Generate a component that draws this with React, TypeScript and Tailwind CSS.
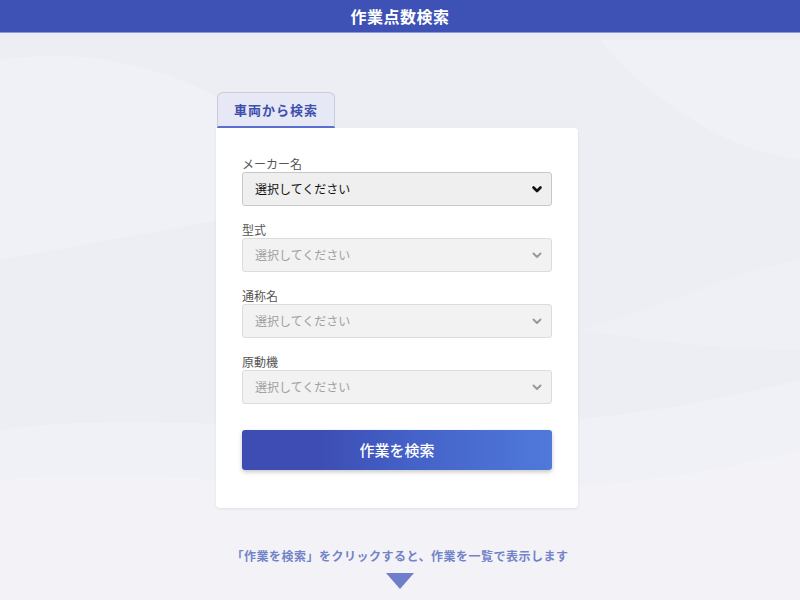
import React from "react";

const font = { fontFamily: '"Noto Sans CJK JP", "Noto Sans", sans-serif' };

const Chevron = ({ disabled }: { disabled?: boolean }) => (
    <svg
        className="pointer-events-none absolute right-[9px] top-1/2 -translate-y-1/2"
        width="12"
        height="12"
        viewBox="0 0 12 12"
    >
        <path
            d="M2.5 4.5 L6 8 L9.5 4.5"
            fill="none"
            stroke={disabled ? "#9a9a9a" : "#111"}
            strokeWidth={disabled ? 2 : 2.6}
            strokeLinecap="round"
            strokeLinejoin="round"
        />
    </svg>
);

const Field = ({ label, disabled }: { label: string; disabled?: boolean }) => (
    <div className="flex flex-col">
        <label className="text-xs leading-4 text-[#555]">{label}</label>
        <div className="relative">
            <select
                disabled={disabled}
                defaultValue=""
                style={font}
                className={
                    disabled
                        ? "h-[34px] w-full appearance-none rounded-[3px] border border-[#dcdcdc] bg-[#f2f2f2] pl-[12px] text-xs text-[#a0a0a0] outline-none"
                        : "h-[34px] w-full appearance-none rounded-[3px] border border-[#c8c8c8] bg-[#efefef] pl-[12px] text-xs text-[#111] outline-none"
                }
            >
                <option value="">選択してください</option>
            </select>
            <Chevron disabled={disabled} />
        </div>
    </div>
);

const Background = () => (
    <svg
        className="pointer-events-none absolute inset-0 h-full w-full"
        viewBox="0 0 800 600"
        preserveAspectRatio="none"
    >
        <path d="M0 60 C120 40 260 90 330 200 L0 260 Z" fill="#ffffff" opacity="0.18" />
        <path d="M0 430 C200 400 450 470 800 380 L800 600 L0 600 Z" fill="#ffffff" opacity="0.22" />
        <path d="M0 480 C250 460 500 530 800 450 L800 600 L0 600 Z" fill="#ffffff" opacity="0.2" />
        <path d="M600 40 C660 110 730 150 800 160 L800 40 Z" fill="#ffffff" opacity="0.18" />
        <path d="M580 330 C680 300 740 270 800 260 L800 350 C740 350 680 345 580 330 Z" fill="#ffffff" opacity="0.15" />
    </svg>
);

const App = () => {
    return (
        <div style={font} className="relative flex h-[600px] w-[800px] flex-col overflow-hidden bg-[#eceef4]">
            <Background />

            <header className="relative z-10 flex h-[33px] items-center justify-center border-b border-[#8f9bd8] bg-[#3e51b5]">
                <h1 className="text-base font-bold tracking-[0.5px] text-white">作業点数検索</h1>
            </header>

            <main className="relative z-10 flex flex-col items-center pt-[59px] pr-[6px]">
                <div className="w-[362px]">
                    <div className="ml-px flex h-[36px] w-[118px] items-center justify-center rounded-t-[6px] border border-b-2 border-[#c9cbd6] border-b-[#5b6ed1] bg-[#e6e8f5]">
                        <span className="text-[13px] font-bold tracking-[1px] text-[#3e4fae]">車両から検索</span>
                    </div>
                    <div className="flex flex-col rounded-b-[4px] rounded-tr-[4px] bg-white px-[26px] pt-[28px] pb-[38px] shadow-[0_1px_3px_rgba(0,0,0,0.08)]">
                        <div className="flex flex-col gap-[16px]">
                            <Field label="メーカー名" />
                            <Field label="型式" disabled />
                            <Field label="通称名" disabled />
                            <Field label="原動機" disabled />
                        </div>
                        <button
                            style={font}
                            className="mt-[26px] h-[40px] w-full rounded-[3px] bg-gradient-to-r from-[#3d4db3] from-25% via-[#4462c8] via-55% to-[#5079db] text-[15px] font-medium text-white shadow-[0_2px_4px_rgba(0,0,0,0.22)]"
                        >
                            作業を検索
                        </button>
                    </div>
                </div>

                <p className="mt-[40px] pl-[6px] text-[12px] leading-4 font-bold tracking-[0.5px] text-[#7383c9]">
                    「作業を検索」をクリックすると、作業を一覧で表示します
                </p>
                <svg className="mt-[9px] ml-[6px]" width="28" height="16" viewBox="0 0 28 16">
                    <path d="M0 0 L28 0 L14 16 Z" fill="#6f7fc9" />
                </svg>
            </main>
        </div>
    );
};

export default App;
